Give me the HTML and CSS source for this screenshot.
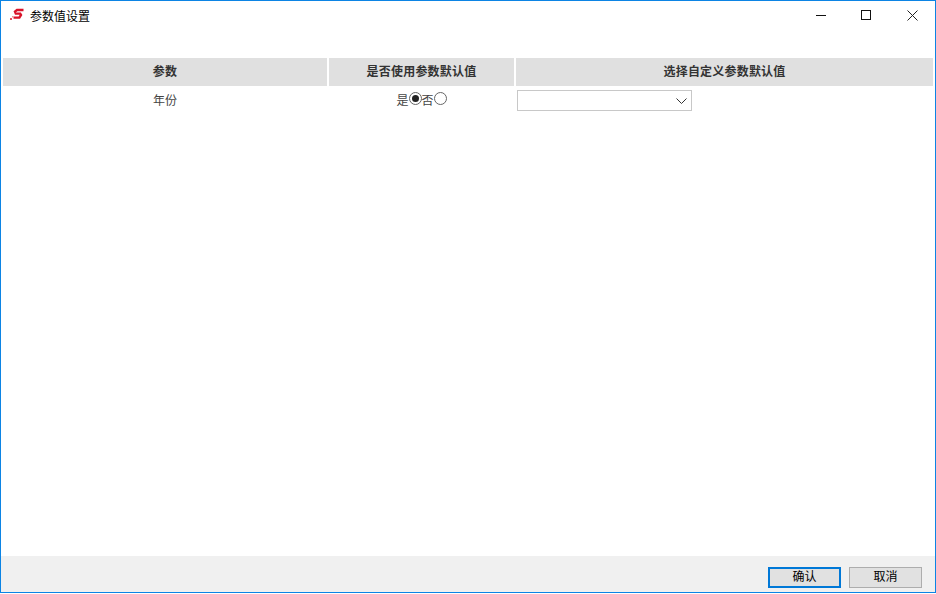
FILE: index.html
```html
<!DOCTYPE html>
<html lang="zh-CN">
<head>
<meta charset="utf-8">
<title>参数值设置</title>
<link rel="stylesheet" href="styles.css">
</head>
<body>
<div class="window">
  <div class="titlebar">
    <svg class="logo" width="16" height="14" viewBox="0 0 16 14">
      <path d="M14.5 2H8L6 3.6 6.8 5.6H11.2L12 7 10.4 9.6H4.5" fill="none" stroke="#d9132a" stroke-width="2.4"/>
      <rect x="1" y="10" width="2" height="2" fill="#e2505f"/>
      <rect x="3" y="8" width="1.5" height="1.5" fill="#ee8c96"/>
    </svg>
    <span class="title">参数值设置</span>
    <div class="controls">
      <svg width="12" height="11" viewBox="0 0 12 11"><path d="M0 5.5H10" stroke="#111" fill="none"/></svg>
      <svg width="12" height="11" viewBox="0 0 12 11"><rect x="0.5" y="0.5" width="9" height="9" stroke="#111" fill="none"/></svg>
      <svg class="close" width="12" height="11" viewBox="0 0 12 11"><path d="M0.5 0.5L10.5 10.5M10.5 0.5L0.5 10.5" stroke="#222" fill="none"/></svg>
    </div>
  </div>
  <div class="content">
    <div class="grid">
      <div class="head">参数</div>
      <div class="head">是否使用参数默认值</div>
      <div class="head">选择自定义参数默认值</div>
      <div class="cell">年份</div>
      <div class="cell radios">
        <span>是</span><span class="radio checked"></span><span>否</span><span class="radio"></span>
      </div>
      <div class="cell left">
        <div class="select">
          <svg width="11" height="6" viewBox="0 0 11 6"><path d="M0.5 0.5L5.5 5.5L10.5 0.5" stroke="#333" fill="none"/></svg>
        </div>
      </div>
    </div>
  </div>
  <div class="footer">
    <button class="btn primary">确认</button>
    <button class="btn">取消</button>
  </div>
</div>
</body>
</html>
```
FILE: styles.css
```css
* { box-sizing: border-box; }
html, body { margin: 0; padding: 0; background: #fff; }
body {
  width: 936px;
  height: 594px;
  overflow: hidden;
  font-family: "Noto Sans CJK SC", "Liberation Sans", sans-serif;
  font-size: 12px;
}
.window {
  width: 936px;
  height: 593px;
  border: 1px solid #0c84e4;
  display: flex;
  flex-direction: column;
  background: #fff;
}
.titlebar {
  height: 29px;
  display: flex;
  align-items: center;
  padding-left: 8px;
  color: #000;
  flex: none;
}
.logo { margin-right: 5px; margin-top: -1px; }
.title { line-height: 29px; margin-top: -1px; }
.controls {
  margin-left: auto;
  display: flex;
  gap: 33px;
  padding-right: 16px;
  margin-top: -1px;
}
.close { margin-left: 1px; }
.content { flex: 1; padding: 28px 2px 0 2px; }
.grid {
  display: grid;
  grid-template-columns: 324px 185px 417px;
  column-gap: 2px;
  grid-template-rows: 28px 30px;
}
.head {
  background: #e0e0e0;
  color: #333;
  font-weight: 700;
  letter-spacing: 0.2px;
  display: flex;
  align-items: center;
  justify-content: center;
  padding-bottom: 4px;
}
.cell {
  color: #444;
  display: flex;
  align-items: center;
  justify-content: center;
  padding-bottom: 4px;
}
.radios { gap: 0; }
.radio {
  width: 13px;
  height: 13px;
  border: 1px solid #666;
  border-radius: 50%;
  background: #fff;
  margin-top: -2px;
  display: flex;
  align-items: center;
  justify-content: center;
}
.radio.checked::after {
  content: "";
  width: 7px;
  height: 7px;
  border-radius: 50%;
  background: #222;
}
.left { justify-content: flex-start; padding: 4px 0 0 1px; align-items: flex-start; }
.select {
  width: 175px;
  height: 21px;
  border: 1px solid #c8c8c8;
  background: #fff;
  display: flex;
  align-items: center;
  justify-content: flex-end;
  padding-right: 4px;
}
.footer {
  height: 36px;
  flex: none;
  background: #f0f0f0;
  display: flex;
  justify-content: flex-end;
  align-items: flex-start;
  gap: 8px;
  padding: 11px 13px 0 0;
}
.btn {
  width: 73px;
  height: 21px;
  padding: 0 0 4px;
  border: 1px solid #adadad;
  background: #e1e1e1;
  color: #000;
  font: inherit;
  line-height: 1;
}
.btn.primary { border: 2px solid #0078d7; }
```
